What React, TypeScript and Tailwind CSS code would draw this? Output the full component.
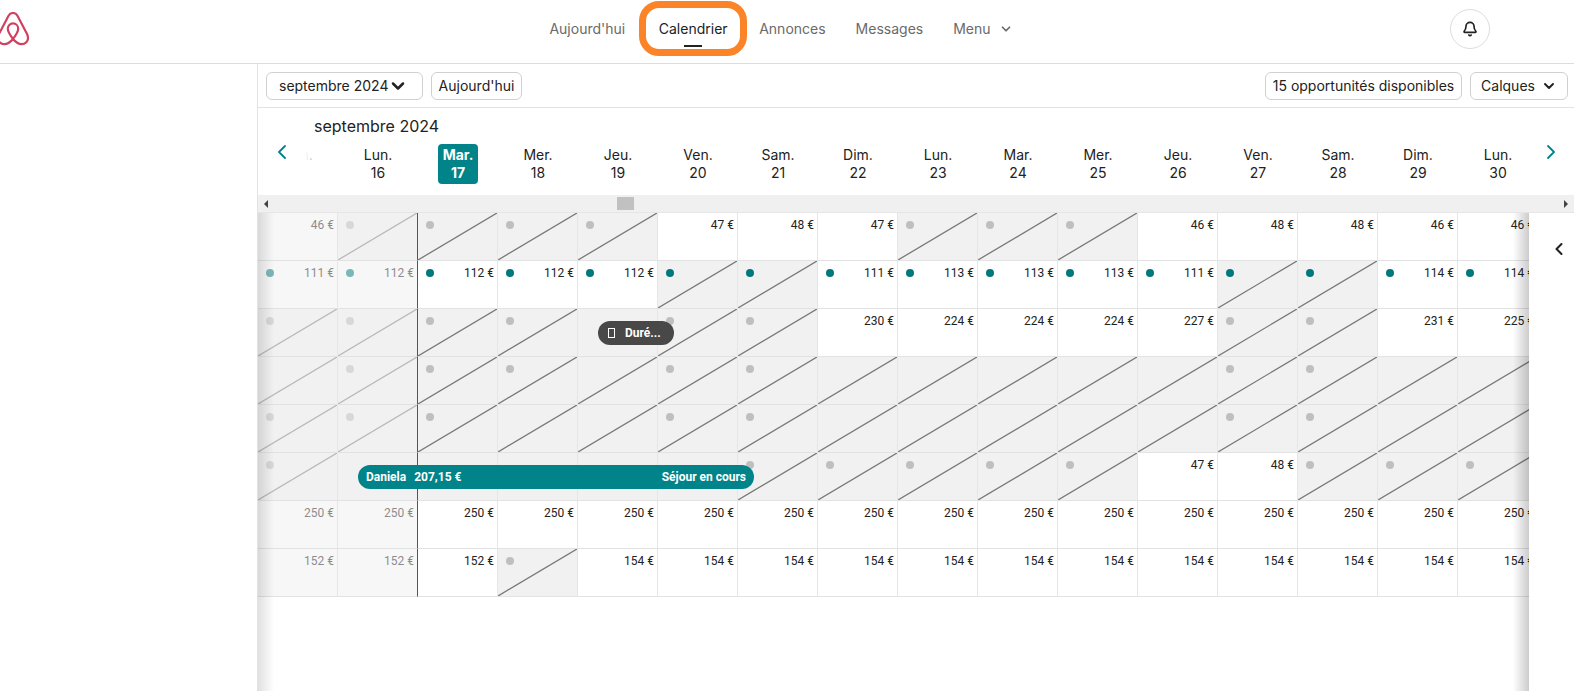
import { Bell, ChevronDown, ChevronLeft, ChevronRight } from "lucide-react";

const days = [
  ["Dim.", 15], ["Lun.", 16], ["Mar.", 17], ["Mer.", 18], ["Jeu.", 19], ["Ven.", 20], ["Sam.", 21], ["Dim.", 22],
  ["Lun.", 23], ["Mar.", 24], ["Mer.", 25], ["Jeu.", 26], ["Ven.", 27], ["Sam.", 28], ["Dim.", 29], ["Lun.", 30],
] as const;

const TODAY = 2;

// number = price, t + number = price with teal dot
// x = blocked, xd = blocked + grey dot, xt = blocked + teal dot, b = booked
const listings = [
  "46 xd xd xd xd 47 48 47 xd xd xd 46 48 48 46 46",
  "t111 t112 t112 t112 t112 xt xt t111 t113 t113 t113 t111 xt xt t114 t114",
  "xd xd xd xd b xd xd 230 224 224 224 227 xd xd 231 225",
  "x xd xd xd x xd xd x x x x x xd xd x x",
  "xd xd xd x x xd xd x x x x x xd xd x x",
  "xd b b b b b xd xd xd xd xd 47 48 xd xd xd",
  "250 250 250 250 250 250 250 250 250 250 250 250 250 250 250 250",
  "152 152 152 xd 154 154 154 154 154 154 154 154 154 154 154 154",
].map((row) => row.split(" "));

function Logo() {
  return (
    <svg viewBox="0 0 32 34" className="h-[34px] w-8" fill="none" stroke="#d2405f" strokeWidth="2.200" strokeLinejoin="round">
      <path d="M16 27c-3.600-4.500-5.200-7.700-5.200-10.400a5.200 5.200 0 0 1 10.400 0c0 2.700-1.600 5.900-5.200 10.400zM16 27c-3.400 4-6 5.200-8.600 5.200-4 0-6.400-3-6.400-6.200 0-1.500.4-2.800 1.200-4.400L11.400 4C12.700 1.700 14 1 16 1s3.300.7 4.600 3l9.200 17.600c.8 1.600 1.200 2.900 1.200 4.400 0 3.200-2.400 6.200-6.400 6.200-2.600 0-5.200-1.200-8.600-5.200z" />
    </svg>
  );
}

function Cell({ value, index }: { value: string; index: number }) {
  const past = index < TODAY;
  const closed = value[0] === "x" || value === "b";
  const price = value.replace("t", "");
  const dot = value === "xd" ? "bg-[#bfbfbf]" : value === "xt" || value[0] === "t" ? "bg-[#00797c]" : "";

  return (
    <td
      className={`relative h-12 border-b border-[#e2e2e2] p-0 align-top ${
        index === TODAY - 1 ? "border-r border-r-[#555555]" : "border-r border-r-[#e6e6e6]"
      } ${closed ? "bg-[#f1f1f1]" : past ? "bg-[#f7f7f7]" : "bg-white"}`}
    >
      {value[0] === "x" && (
        <svg className={`absolute inset-0 size-full ${past ? "opacity-45" : ""}`} viewBox="0 0 80 48" preserveAspectRatio="none">
          <line x1="0" y1="48" x2="80" y2="0" stroke="#777777" strokeWidth="1.300" />
        </svg>
      )}
      <div className={`flex h-6 items-center justify-between pr-[3px] pl-2 ${past ? "opacity-50" : ""}`}>
        <span className={`size-2 rounded-full ${dot}`} />
        {!closed && <span className="font-['Roboto','Liberation_Sans',sans-serif] text-xs text-[#222222]">{price} €</span>}
      </div>
    </td>
  );
}

export default function App() {
  return (
    <div className="flex min-h-screen flex-col overflow-hidden bg-white font-['Inter','Liberation_Sans',sans-serif] text-sm text-[#222222]">
      <header className="grid h-16 shrink-0 grid-cols-[1fr_auto_1fr] items-center border-b border-[#dddddd] pb-1.5">
        <a href="#" aria-label="Accueil" className="-ml-[3px] w-fit">
          <Logo />
        </a>
        <nav className="flex items-center text-[#6a6a6a]">
          <a href="#" className="pr-3.5 pl-4">Aujourd'hui</a>
          <a href="#" className="relative flex h-[55px] w-[108px] items-center justify-center rounded-[20px] border-[7px] border-[#fb8429] text-[#222222]">
            Calendrier
            <span className="absolute bottom-0.5 h-0.5 w-[18px] bg-[#222222]" />
          </a>
          <a href="#" className="pr-4 pl-3">Annonces</a>
          <a href="#" className="px-3.5">Messages</a>
          <button type="button" className="flex items-center gap-2 pr-7 pl-4">
            Menu
            <ChevronDown size={14} strokeWidth={3} />
          </button>
        </nav>
        <button type="button" aria-label="Notifications" className="mr-[84px] flex size-10 items-center justify-center justify-self-end rounded-full border border-[#dddddd]">
          <Bell size={16} strokeWidth={2.500} />
        </button>
      </header>

      <div className="flex grow">
        <aside className="w-[257px] shrink-0" />
        <main className="flex min-w-0 grow flex-col border-l border-[#e2e2e2]">
          <div className="flex h-11 shrink-0 items-center gap-2 border-b border-[#e2e2e2] px-2 pr-1.5">
            <button type="button" className="flex h-7 w-[157px] items-center rounded-md border border-[#d0d0d0] pl-3">
              septembre 2024
              <ChevronDown size={20} strokeWidth={3} />
            </button>
            <button type="button" className="h-7 w-[91px] rounded-md border border-[#d0d0d0]">Aujourd'hui</button>
            <button type="button" className="ml-auto h-7 w-[197px] rounded-md border border-[#d0d0d0]">
              15 opportunités disponibles
            </button>
            <button type="button" className="flex h-7 w-[98px] items-center justify-center gap-1.5 rounded-md border border-[#d0d0d0]">
              Calques
              <ChevronDown size={16} strokeWidth={3} />
            </button>
          </div>

          <h1 className="pt-2 pl-14 text-base leading-5">septembre 2024</h1>
          <div className="relative flex h-[59px] shrink-0 items-start overflow-hidden pt-2">
            {days.map(([name, date], i) => (
              <div key={date} className="flex w-20 shrink-0 justify-center">
                <div
                  className={`w-10 rounded py-0.5 text-center leading-[18px] ${
                    i === TODAY ? "bg-[#008489] font-bold text-white" : ""
                  }`}
                >
                  {name}
                  <br />
                  {i > 0 && date}
                </div>
              </div>
            ))}
            <button type="button" aria-label="Jours précédents" className="absolute top-0 left-0 flex h-full w-14 items-start bg-linear-to-r from-white from-85% to-white/60 pt-1 pl-3 text-[#008489]">
              <ChevronLeft size={24} strokeWidth={1.800} />
            </button>
            <button type="button" aria-label="Jours suivants" className="absolute top-0 right-0 flex h-full w-[45px] items-start bg-white pt-1 pl-2.5 text-[#008489]">
              <ChevronRight size={24} strokeWidth={1.800} />
            </button>
          </div>

          <div className="flex h-[18px] shrink-0 items-center justify-between border-b border-[#e6e6e6] bg-[#f0f0f0] px-1.5">
            <svg viewBox="0 0 4 8" className="h-2 w-1" fill="#444444"><path d="M4 0v8L0 4z" /></svg>
            <span className="mr-auto ml-[349px] h-[13px] w-[17px] bg-[#c1c1c1]" />
            <svg viewBox="0 0 4 8" className="h-2 w-1" fill="#444444"><path d="M0 0v8l4-4z" /></svg>
          </div>

          <div className="flex grow">
            <div className="relative min-w-0 grow overflow-hidden">
              <table className="w-[1280px] table-fixed border-separate border-spacing-0">
                <tbody>
                  {listings.map((row, r) => (
                    <tr key={r}>
                      {row.map((value, i) => (
                        <Cell key={i} value={value} index={i} />
                      ))}
                    </tr>
                  ))}
                </tbody>
              </table>
              <button type="button" className="absolute top-[108px] left-[340px] flex h-6 w-[76px] items-center gap-2.5 rounded-full bg-[#484848] pl-2.5 font-['Roboto','Liberation_Sans',sans-serif] text-xs font-bold text-white">
                <span className="h-2.5 w-[7px] border border-white" />
                Duré...
              </button>
              <button type="button" className="absolute top-[252px] left-[100px] flex h-6 w-[396px] items-center gap-2 rounded-full bg-[#008489] px-2 font-['Roboto','Liberation_Sans',sans-serif] text-xs font-bold text-white">
                <span>Daniela</span>
                <span>207,15 €</span>
                <span className="ml-auto">Séjour en cours</span>
              </button>
              <div className="pointer-events-none absolute inset-y-0 left-0 w-4 bg-linear-to-r from-black/12 to-transparent" />
              <div className="pointer-events-none absolute inset-y-0 right-0 w-4 bg-linear-to-l from-black/20 to-transparent" />
            </div>
            <aside className="w-[45px] shrink-0 bg-white pt-[26px] pl-5">
              <button type="button" aria-label="Ouvrir le panneau">
                <ChevronLeft size={20} strokeWidth={2.500} />
              </button>
            </aside>
          </div>
        </main>
      </div>
    </div>
  );
}
